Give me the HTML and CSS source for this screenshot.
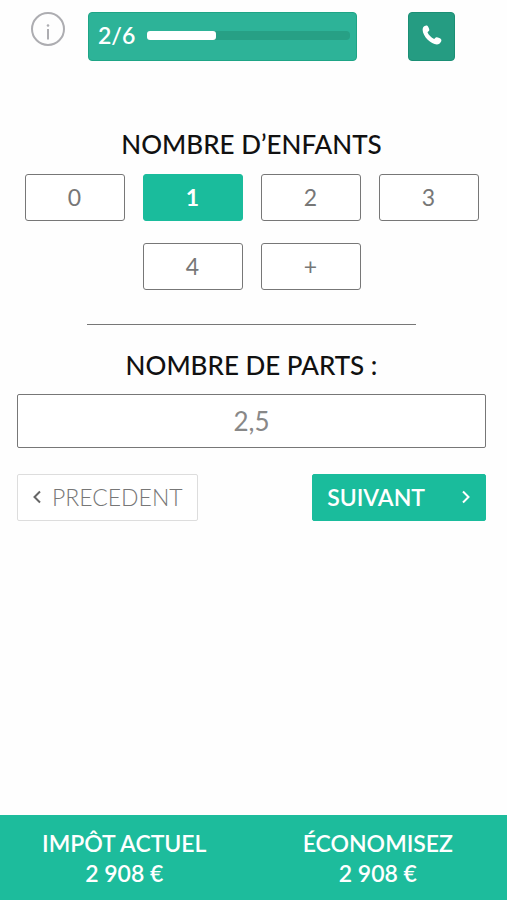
FILE: index.html
```html
<!DOCTYPE html>
<html lang="fr">
<head>
<meta charset="utf-8">
<meta name="viewport" content="width=device-width, initial-scale=1">
<title>Nombre d’enfants</title>
<link rel="stylesheet" href="styles.css">
</head>
<body>
<header class="top">
  <button class="info" type="button" aria-label="Informations">
    <svg viewBox="0 0 36 36" width="36" height="36" fill="none" stroke="#adadb1">
      <circle cx="18" cy="17" r="16" stroke-width="2"/>
      <path d="M18 17v10.500" stroke-width="2"/>
      <circle cx="18" cy="13.500" r="1.300" fill="#adadb1" stroke="none"/>
    </svg>
  </button>
  <div class="progress">
    <span class="step">2/6</span>
    <div class="track"><div class="fill"></div></div>
  </div>
  <button class="phone" type="button" aria-label="Appeler">
    <svg viewBox="0 0 20 20" width="20" height="20" fill="#fff">
      <path d="M1.200 2.200C2.300 .9 3.900 0 5 .6C6.300 1.500 7 3.300 7.300 4.800C7.500 6.100 5.900 6.600 5.500 7.300C6.500 10 9.200 12.700 12.200 13.900C13 13.400 13.400 12 14.700 12.200C16.200 12.400 18.400 13.100 19.200 14.400C19.900 15.800 18.700 17.700 17.300 18.700C14.500 20.600 9.200 18.300 5.700 14.700C2 10.900-.6 5.400 1.200 2.200Z"/>
    </svg>
  </button>
</header>
<main class="content">
  <h2 class="title" id="children">NOMBRE D’ENFANTS</h2>
  <div class="choices" role="group" aria-labelledby="children">
    <button class="choice" type="button">0</button>
    <button class="choice selected" type="button" aria-pressed="true">1</button>
    <button class="choice" type="button">2</button>
    <button class="choice" type="button">3</button>
    <button class="choice" type="button">4</button>
    <button class="choice" type="button">+</button>
  </div>
  <hr class="rule">
  <label class="title" for="parts">NOMBRE DE PARTS :</label>
  <input class="parts" id="parts" type="text" value="2,5">
  <nav class="actions">
    <button class="prev" type="button">
      <svg viewBox="0 0 10 14" width="10" height="14" fill="none" stroke="#666" stroke-width="2"><path d="M8 1.500L2.500 7L8 12.500"/></svg>
      PRECEDENT
    </button>
    <button class="next" type="button">
      SUIVANT
      <svg viewBox="0 0 10 14" width="10" height="14" fill="none" stroke="#fff" stroke-width="2"><path d="M2 1.500L7.500 7L2 12.500"/></svg>
    </button>
  </nav>
</main>
<footer class="summary">
  <div>IMPÔT ACTUEL<br>2 908 €</div>
  <div>ÉCONOMISEZ<br>2 908 €</div>
</footer>
</body>
</html>
```
FILE: styles.css
```css
* { box-sizing: border-box; }
body {
  margin: 0;
  min-height: 100vh;
  display: flex;
  flex-direction: column;
  background: #fefefe;
  font-family: Lato, sans-serif;
  font-size: 23px;
  line-height: 30px;
}
button, input { font: inherit; margin: 0; }
svg { display: block; flex: none; }
.top {
  display: flex;
  align-items: flex-start;
  padding: 12px 52px 0 30px;
}
.info { padding: 0; border: 0; background: none; }
.progress {
  flex: 1;
  display: flex;
  align-items: center;
  gap: 12px;
  height: 49px;
  margin: 0 51px 0 22px;
  padding: 0 6px 3px 9px;
  border: 1px solid #1ea586;
  border-radius: 4px;
  background: #2db398;
  color: #fff;
}
.step { font-weight: 600; }
.track {
  flex: 1;
  height: 9px;
  border-radius: 4px;
  background: #27a085;
}
.fill {
  width: 34%;
  height: 9px;
  border-radius: 3px;
  background: #fff;
}
.phone {
  display: flex;
  align-items: center;
  justify-content: center;
  width: 47px;
  height: 49px;
  padding: 0 0 4px;
  border: 1px solid #1b8f75;
  border-radius: 4px;
  background: #259c82;
}
.content {
  flex: 1;
  display: flex;
  flex-direction: column;
  padding: 68px 21px 0 17px;
}
.title {
  margin: 0;
  font-size: 26px;
  font-weight: 500;
  text-align: center;
  color: #111;
}
.choices {
  display: flex;
  flex-wrap: wrap;
  justify-content: center;
  gap: 22px 18px;
  margin-top: 15px;
}
.choice {
  width: 100px;
  height: 47px;
  padding: 0 0 2px;
  border: 1px solid #777;
  border-radius: 3px;
  background: #fff;
  color: #777;
}
.selected {
  border-color: #1abc9c;
  background: #1abc9c;
  color: #fff;
  font-weight: 700;
}
.rule {
  width: 70%;
  margin: 34px auto 25px;
  border: 0;
  border-top: 1px solid #777;
}
.parts {
  width: 100%;
  height: 54px;
  margin-top: 14px;
  padding: 0;
  border: 1px solid #777;
  border-radius: 2px;
  background: #fff;
  color: #888;
  font-size: 26px;
  text-align: center;
}
.actions {
  display: flex;
  justify-content: space-between;
  margin-top: 26px;
}
.prev, .next {
  display: flex;
  align-items: center;
  height: 47px;
  padding: 0 14px 2px;
  border: 1px solid #ddd;
  border-radius: 2px;
}
.prev {
  gap: 10px;
  background: #fff;
  color: #777;
  font-weight: 300;
}
.next {
  gap: 36px;
  border-color: #1abc9c;
  background: #1abc9c;
  color: #fff;
  font-weight: 600;
}
.summary {
  display: flex;
  justify-content: space-between;
  padding: 13px 54px 12px 42px;
  background: #1dbc9c;
  color: #fff;
  font-weight: 600;
  text-align: center;
}
```
